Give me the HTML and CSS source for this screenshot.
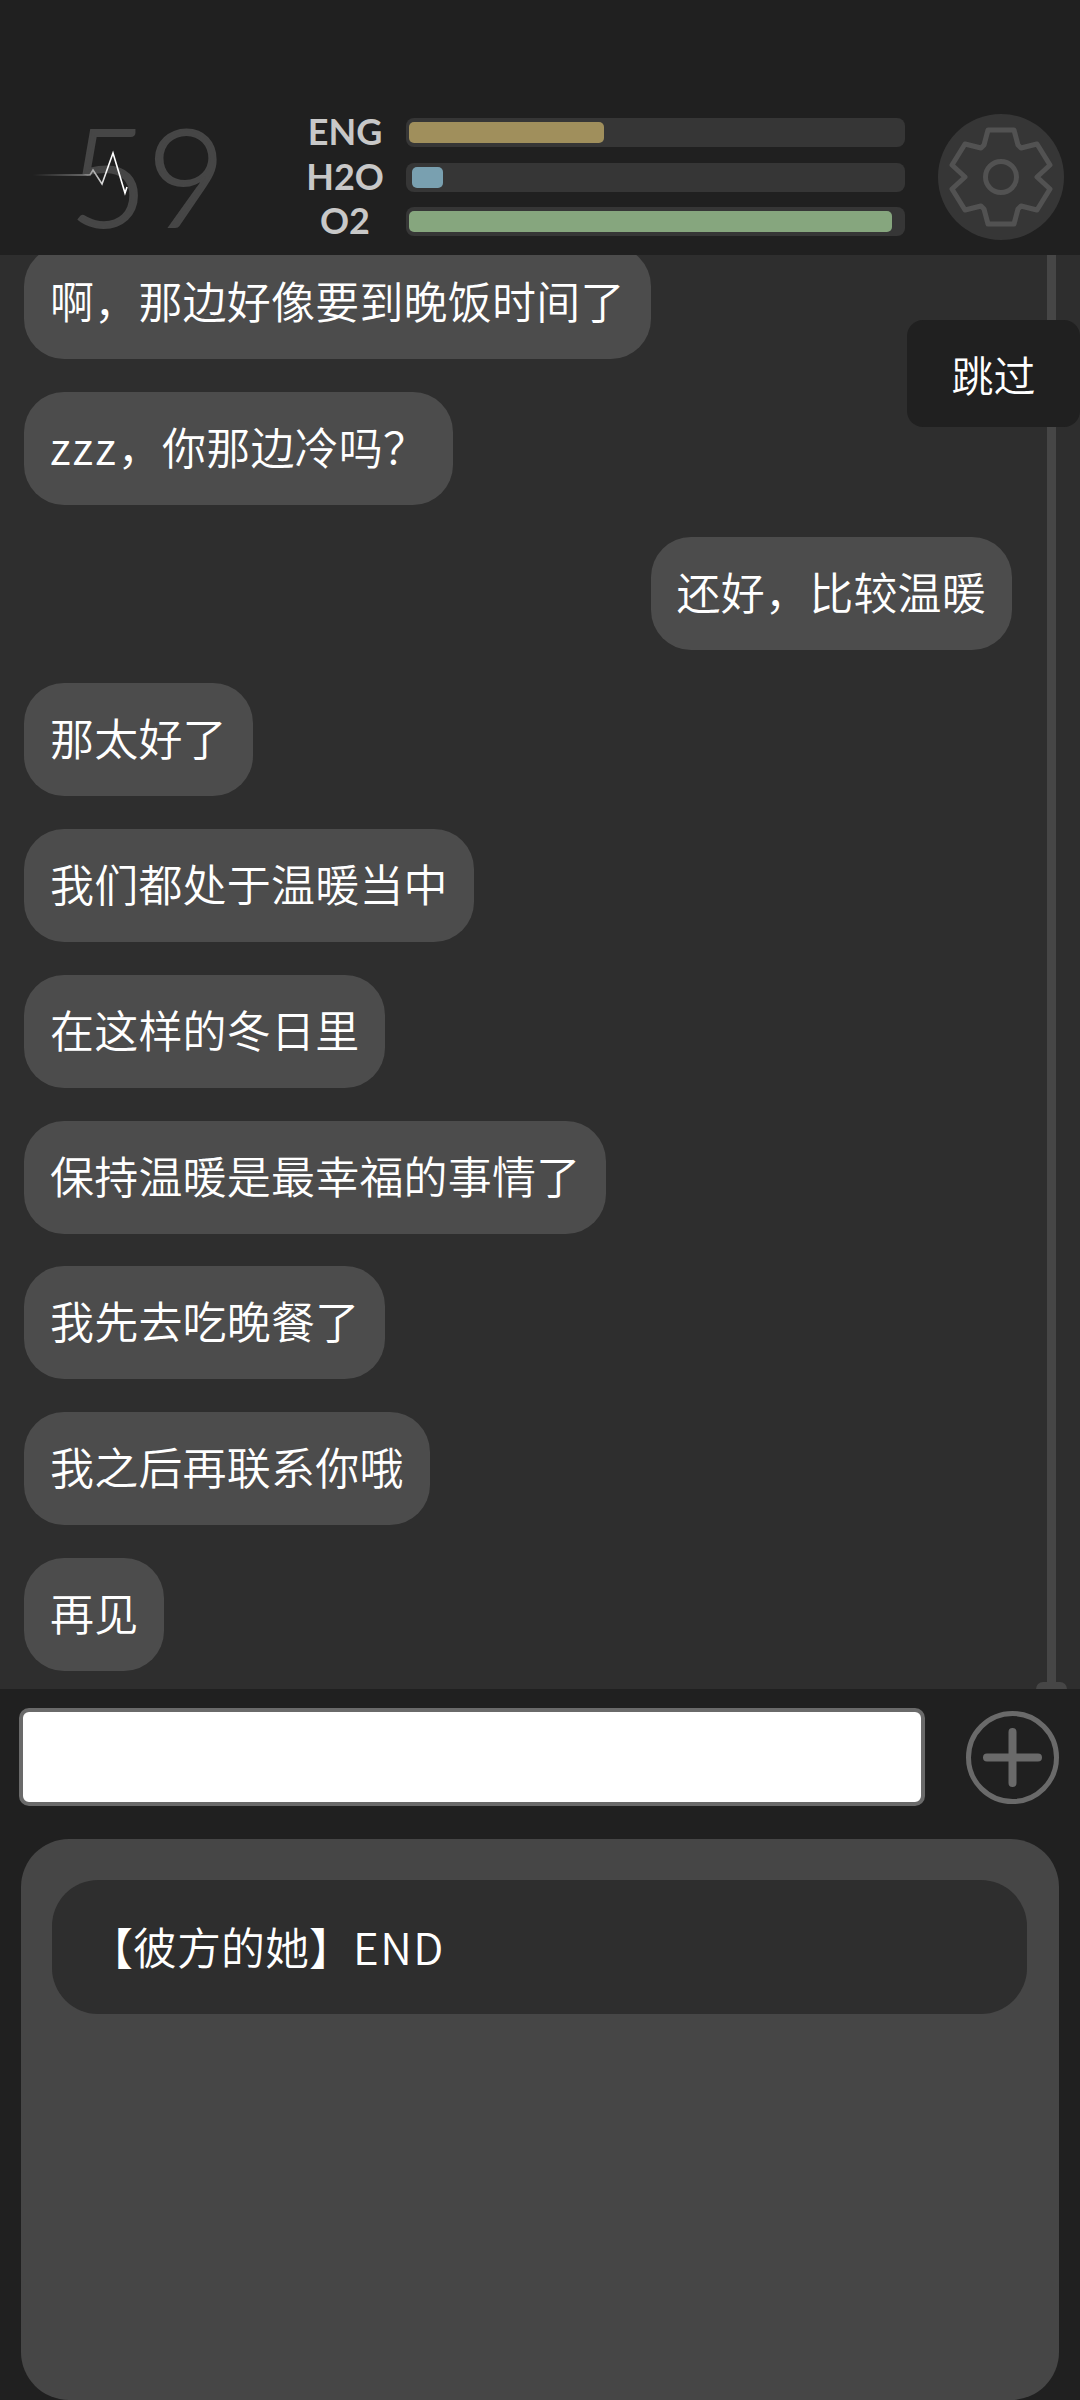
FILE: index.html
```html
<!DOCTYPE html>
<html lang="zh-CN">
<head>
    <meta charset="UTF-8">
    <title>彼方的她</title>
    <link rel="stylesheet" href="styles.css">
</head>
<body>
<div class="app">

    <!-- Status header -->
    <header class="status">
        <div class="pulse">
            <span class="pulse-num">59</span>
            <svg class="pulse-line" width="110" height="60" viewBox="0 0 110 60">
                <defs>
                    <linearGradient id="fade" x1="0" y1="0" x2="1" y2="0">
                        <stop offset="0" stop-color="#fff" stop-opacity="0"/>
                        <stop offset="0.6" stop-color="#fff" stop-opacity="0.45"/>
                        <stop offset="0.8" stop-color="#fff"/>
                    </linearGradient>
                </defs>
                <path d="M0 25H57L60 20 69 34 80 3 92 43 94 37" fill="none" stroke="url(#fade)" stroke-width="1.6"/>
            </svg>
        </div>
        <div class="meters">
            <div class="meter">
                <span class="meter-label">ENG</span>
                <div class="track"><div class="fill fill-eng" style="width: 39.6%"></div></div>
            </div>
            <div class="meter">
                <span class="meter-label">H2O</span>
                <div class="track track-h2o"><div class="fill fill-h2o" style="width: 6.3%"></div></div>
            </div>
            <div class="meter">
                <span class="meter-label">O2</span>
                <div class="track"><div class="fill fill-o2" style="width: 98%"></div></div>
            </div>
        </div>
        <button class="settings" aria-label="设置">
            <svg width="104" height="102" viewBox="0 0 104 102">
                <path d="M39 4H65L69 19 72 22 88 18 101 39 88 51 101 63 88 84 72 80 69 83 65 98H39L35 83 32 80 16 84 3 63 16 51 3 39 16 18 32 22 35 19Z" fill="none" stroke="#525252" stroke-width="5" stroke-linejoin="round"/>
                <circle cx="52" cy="51" r="15.500" fill="none" stroke="#525252" stroke-width="5"/>
            </svg>
        </button>
    </header>

    <!-- Chat log -->
    <main class="chat">
        <div class="msg">啊，那边好像要到晚饭时间了</div>
        <div class="msg"><span class="latin">zzz</span>，你那边冷吗？</div>
        <div class="msg msg-me">还好，比较温暖</div>
        <div class="msg">那太好了</div>
        <div class="msg">我们都处于温暖当中</div>
        <div class="msg">在这样的冬日里</div>
        <div class="msg">保持温暖是最幸福的事情了</div>
        <div class="msg">我先去吃晚餐了</div>
        <div class="msg">我之后再联系你哦</div>
        <div class="msg">再见</div>
        <div class="scrollbar"></div>
        <button class="skip">跳过</button>
    </main>

    <!-- Input row -->
    <div class="composer">
        <div class="text-box"></div>
        <button class="add" aria-label="添加">
            <svg width="93" height="93" viewBox="0 0 93 93">
                <circle cx="46.500" cy="46.500" r="44" fill="none" stroke="#6a6a6a" stroke-width="5"/>
                <path d="M46.500 21V72M21 46.500H72" fill="none" stroke="#6a6a6a" stroke-width="8" stroke-linecap="round"/>
            </svg>
        </button>
    </div>

    <!-- Story list -->
    <section class="panel">
        <div class="story">【彼方的她】<span class="latin">END</span></div>
    </section>

</div>
</body>
</html>
```

FILE: styles.css
```css
html, body {
    margin: 0;
    height: 100%;
    background-color: #202020;
}

.app {
    display: flex;
    flex-direction: column;
    width: 1080px;
    height: 2400px;
    overflow: hidden;
    font-family: "Noto Sans CJK SC", "Noto Sans", sans-serif;
    font-weight: 350;
    color: #fff;
}

button {
    padding: 0;
    border: none;
    font-family: inherit;
    font-weight: inherit;
}

/* Header */
.status {
    display: flex;
    align-items: flex-start;
    flex: none;
    height: 255px;
    box-sizing: border-box;
    padding-top: 113px;
    background-color: #202020;
    position: relative;
    z-index: 2;
}

.pulse {
    position: relative;
    flex: none;
    width: 295px;
    height: 120px;
}

.pulse-num {
    position: absolute;
    left: 69px;
    top: -23px;
    font-family: Lato, sans-serif;
    font-weight: 300;
    font-size: 136px;
    line-height: 170px;
    letter-spacing: -1px;
    color: #464646;
    -webkit-text-stroke: 2px #464646;
}

.pulse-line {
    position: absolute;
    left: 33px;
    top: 37px;
}

.meters {
    display: flex;
    flex-direction: column;
    gap: 15.500px;
    flex: none;
    margin-top: 5px;
}

.meter {
    display: flex;
    align-items: center;
    height: 29px;
}

.meter-label {
    width: 100px;
    margin: -3px 11px 0 0;
    text-align: center;
    font-family: Lato, sans-serif;
    font-weight: 700;
    font-size: 36px;
    line-height: 28px;
    color: #c8c8c8;
}

.track {
    width: 499px;
    height: 29px;
    box-sizing: border-box;
    padding: 4px 3px;
    background-color: #363636;
    border-radius: 8px;
}

.track-h2o {
    padding-left: 6px;
}

.fill {
    height: 21px;
    border-radius: 5px;
}

.fill-eng { background-color: #a08f5c; }
.fill-h2o { background-color: #79a0b0; }
.fill-o2 { background-color: #86a67e; }

.settings {
    display: flex;
    align-items: center;
    justify-content: center;
    flex: none;
    width: 126px;
    height: 126px;
    margin: 1px 0 0 33px;
    border-radius: 50%;
    background-color: #363636;
}

/* Chat */
.chat {
    position: relative;
    display: flex;
    flex-direction: column;
    justify-content: flex-end;
    align-items: flex-start;
    gap: 32.800px;
    flex: none;
    height: 1434px;
    box-sizing: border-box;
    padding: 0 68px 18px 24px;
    background-color: #2e2e2e;
    overflow: hidden;
}

.msg {
    flex: none;
    height: 113px;
    box-sizing: border-box;
    padding: 0 26px;
    background-color: #4c4c4c;
    border-radius: 40px;
    font-size: 44px;
    line-height: 109px;
    letter-spacing: 0.2px;
    white-space: nowrap;
}

.latin {
    letter-spacing: 1.5px;
}

.msg .latin {
    letter-spacing: 2px;
}

.msg-me {
    align-self: flex-end;
}

.scrollbar {
    position: absolute;
    top: 0;
    bottom: 0;
    left: 1047px;
    width: 9px;
    background-color: #464646;
}

.scrollbar::after {
    content: "";
    position: absolute;
    left: -11px;
    bottom: 0;
    width: 31px;
    height: 7px;
    background-color: #464646;
    border-radius: 16px 16px 0 0;
}

.skip {
    position: absolute;
    top: 65px;
    right: 0;
    width: 173px;
    height: 107px;
    background-color: #202020;
    border-radius: 16px;
    color: #fff;
    font-size: 42px;
}

/* Composer */
.composer {
    display: flex;
    align-items: center;
    flex: none;
    height: 136px;
    padding-left: 19px;
    box-sizing: border-box;
}

.text-box {
    width: 906px;
    height: 98px;
    box-sizing: border-box;
    background-color: #fff;
    border: 4px solid #6a6a6a;
    border-radius: 10px;
}

.add {
    display: flex;
    flex: none;
    width: 93px;
    height: 93px;
    margin-left: 41px;
    background: none;
}

/* Story panel */
.panel {
    flex: none;
    height: 561px;
    box-sizing: border-box;
    margin: 14px 21px 0;
    padding: 41px 32px 0 31px;
    background-color: #464646;
    border-radius: 48px;
}

.story {
    height: 134px;
    box-sizing: border-box;
    padding-left: 37px;
    background-color: #2e2e2e;
    border-radius: 46px;
    font-size: 44px;
    line-height: 132px;
}
```
